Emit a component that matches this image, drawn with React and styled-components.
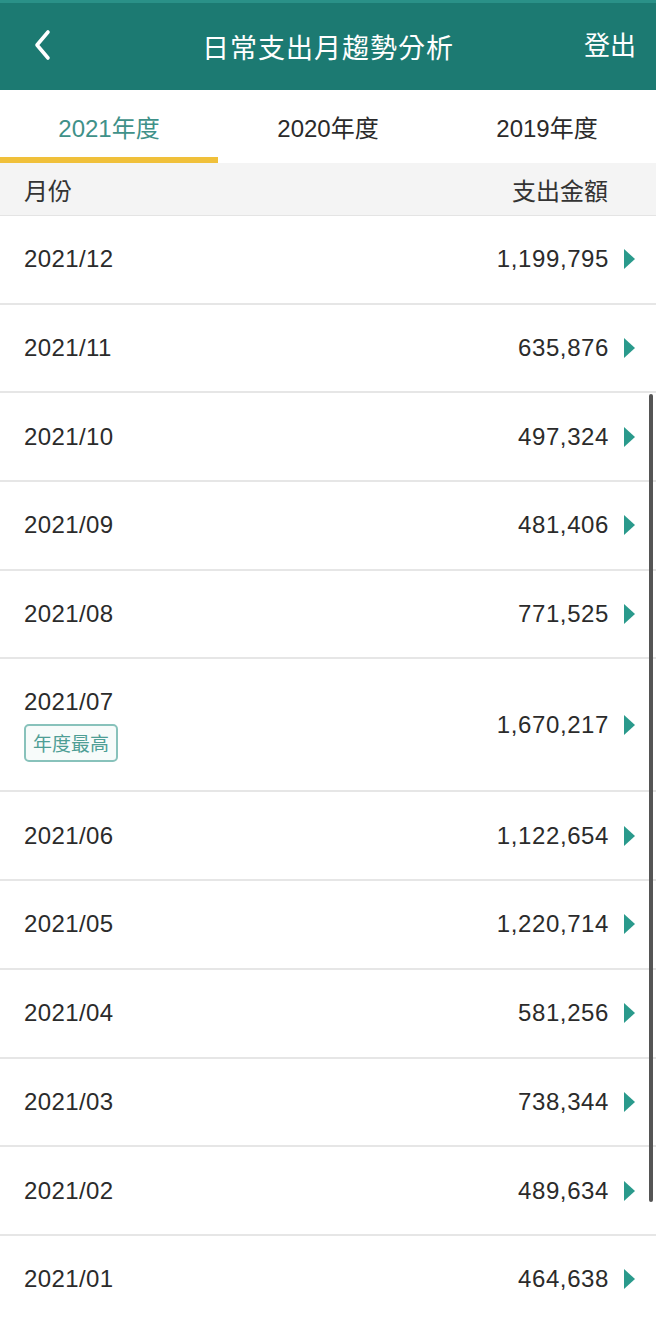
import React from 'react'
import styled, { createGlobalStyle } from 'styled-components'

const GlobalStyle = createGlobalStyle`
  html, body {
    margin: 0;
    padding: 0;
    background: #ffffff;
  }
  body {
    font-family: "Liberation Sans", Arial, "Noto Sans CJK TC", sans-serif;
    color: #2b2b2b;
  }
`

const months = [
  { month: '2021/12', amount: '1,199,795' },
  { month: '2021/11', amount: '635,876' },
  { month: '2021/10', amount: '497,324' },
  { month: '2021/09', amount: '481,406' },
  { month: '2021/08', amount: '771,525' },
  { month: '2021/07', amount: '1,670,217', top: true },
  { month: '2021/06', amount: '1,122,654' },
  { month: '2021/05', amount: '1,220,714' },
  { month: '2021/04', amount: '581,256' },
  { month: '2021/03', amount: '738,344' },
  { month: '2021/02', amount: '489,634' },
  { month: '2021/01', amount: '464,638' },
]

const tabs = ['2021年度', '2020年度', '2019年度']

function BackIcon() {
  return (
    <svg width='22' height='32' viewBox='0 0 22 32'>
      <path d='M16 3 L5 16 L16 29' fill='none' stroke='#ffffff' strokeWidth='3.6' strokeLinecap='round' strokeLinejoin='round'/>
    </svg>
  )
}

function Arrow() {
  return (
    <svg width='13' height='22' viewBox='0 0 13 22'>
      <path d='M1 1 L12 11 L1 21 Z' fill='#2a9a8c'/>
    </svg>
  )
}

export default function App() {
  return (
    <Page>
      <GlobalStyle/>
      <Header>
        <BackButton><BackIcon/></BackButton>
        <HeaderTitle>日常支出月趨勢分析</HeaderTitle>
        <Logout>登出</Logout>
      </Header>
      <Tabs>
        {tabs.map((t, i) => (
          <Tab key={t} $active={i === 0}>{t}</Tab>
        ))}
      </Tabs>
      <ColumnHeader>
        <span>月份</span>
        <span>支出金額</span>
      </ColumnHeader>
      <List>
        {months.map((m) => (
          <Row key={m.month} $tall={m.top}>
            <MonthCell>
              <Month>{m.month}</Month>
              {m.top && <Badge>年度最高</Badge>}
            </MonthCell>
            <AmountCell>
              <Amount>{m.amount}</Amount>
              <Arrow/>
            </AmountCell>
          </Row>
        ))}
        <Scrollbar/>
      </List>
    </Page>
  )
}

const Page = styled.div`
  width: 656px;
  min-height: 1323px;
  overflow: hidden;
  background: #ffffff;
`

const Header = styled.header`
  height: 90px;
  background: #1c7a72;
  border-top: 3px solid #2a9188;
  box-sizing: border-box;
  display: flex;
  align-items: center;
  justify-content: space-between;
  padding: 0 20px 0 32px;
  position: relative;
`

const BackButton = styled.div`
  display: flex;
  align-items: center;
  margin-top: -4px;
`

const HeaderTitle = styled.h1`
  margin: 0;
  position: absolute;
  left: 0;
  right: 0;
  text-align: center;
  font-family: "Noto Sans CJK TC", sans-serif;
  font-size: 27px;
  font-weight: 400;
  color: #ffffff;
  letter-spacing: 1px;
  pointer-events: none;
`

const Logout = styled.span`
  font-family: "Noto Sans CJK TC", sans-serif;
  font-size: 26px;
  color: #ffffff;
  position: relative;
  margin-top: -6px;
`

const Tabs = styled.nav`
  display: grid;
  grid-template-columns: 218px 220px 218px;
  height: 73px;
  background: #ffffff;
`

const Tab = styled.div`
  display: flex;
  align-items: center;
  justify-content: center;
  padding-top: 6px;
  box-sizing: border-box;
  font-size: 24px;
  font-family: "Liberation Sans", Arial, "Noto Sans CJK TC", sans-serif;
  color: ${(p) => (p.$active ? '#3f9189' : '#2a2a2a')};
  border-bottom: 6px solid ${(p) => (p.$active ? '#f0c03a' : 'transparent')};
`

const ColumnHeader = styled.div`
  height: 52px;
  background: #f4f4f4;
  border-bottom: 1px solid #e4e4e4;
  display: flex;
  align-items: center;
  justify-content: space-between;
  padding: 0 48px 0 24px;
  font-family: "Noto Sans CJK TC", sans-serif;
  font-size: 24px;
  color: #333333;
`

const List = styled.div`
  position: relative;
`

const Row = styled.div`
  height: ${(p) => (p.$tall ? '133px' : '88.7px')};
  box-sizing: border-box;
  border-bottom: 2px solid #e6e6e6;
  display: flex;
  align-items: center;
  justify-content: space-between;
  padding: 0 20px 0 24px;
`

const MonthCell = styled.div`
  display: flex;
  flex-direction: column;
  align-items: flex-start;
  gap: 8px;
`

const Month = styled.span`
  font-size: 24px;
  letter-spacing: 0.4px;
  color: #2b2b2b;
`

const Badge = styled.span`
  font-family: "Noto Sans CJK TC", sans-serif;
  font-size: 19px;
  line-height: 34px;
  padding: 0 7px;
  color: #4e9e95;
  border: 2px solid #88c2bb;
  border-radius: 5px;
  background: #f7fbfa;
`

const AmountCell = styled.div`
  display: flex;
  align-items: center;
  gap: 14px;
`

const Amount = styled.span`
  font-size: 24px;
  letter-spacing: 0.6px;
  color: #2b2b2b;
`

const Scrollbar = styled.div`
  position: absolute;
  right: 3px;
  top: 178px;
  width: 4px;
  height: 808px;
  border-radius: 2px;
  background: #555555;
`
